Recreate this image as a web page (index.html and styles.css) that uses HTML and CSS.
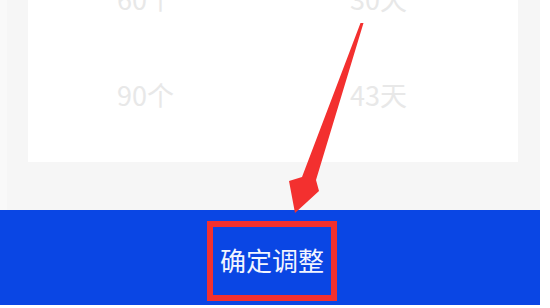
FILE: index.html
```html
<!DOCTYPE html>
<html lang="zh-CN">
<head>
<meta charset="utf-8">
<title>确定调整</title>
<link rel="stylesheet" href="styles.css">
</head>
<body>
<div class="screen">
  <div class="top">
    <div class="card">
      <div class="row first">
        <span class="cell">60个</span>
        <span class="cell">30天</span>
      </div>
      <div class="row">
        <span class="cell">90个</span>
        <span class="cell">43天</span>
      </div>
    </div>
  </div>
  <div class="bar">
    <span class="confirm">确定调整</span>
  </div>
  <svg class="arrow" width="550" height="308" viewBox="0 0 550 308" aria-hidden="true">
    <polygon points="360.5,23 363.5,23 316,180 319,191 295,213 289,181 302,177" fill="#f3302f"/>
  </svg>
</div>
</body>
</html>
```

FILE: styles.css
```css
html, body {
  margin: 0;
  padding: 0;
  background: #ffffff;
}

body {
  width: 550px;
  height: 308px;
  overflow: hidden;
  font-family: "Noto Sans CJK SC", "Noto Sans", sans-serif;
}

.screen {
  position: relative;
  width: 540px;
  height: 305px;
  display: flex;
  flex-direction: column;
  background: #f6f6f6;
  overflow: hidden;
}

.top {
  height: 210px;
  padding-left: 21px;
  border-left: 7px solid #f9f9f9;
  box-sizing: border-box;
  flex: none;
}

.card {
  width: 490px;
  height: 162px;
  background: #ffffff;
  display: flex;
  flex-direction: column;
  gap: 70px;
  padding-left: 89px;
  box-sizing: border-box;
  overflow: hidden;
}

.row {
  display: grid;
  grid-template-columns: 233px 1fr;
  height: 26px;
  font-size: 27px;
  line-height: 26px;
  color: #e8e8e8;
}

.row.first {
  margin-top: -14px;
}

.bar {
  flex: 1;
  background: #0a46e4;
  display: flex;
  justify-content: center;
  align-items: flex-start;
  padding-top: 11px;
  padding-left: 4px;
  box-sizing: border-box;
}

.confirm {
  display: inline-block;
  width: 130px;
  height: 80px;
  border: 6px solid #f3302f;
  box-sizing: border-box;
  color: #f2f5ff;
  font-size: 26px;
  line-height: 66px;
  text-align: center;
}

.arrow {
  position: absolute;
  left: 0;
  top: 0;
  pointer-events: none;
}
```
